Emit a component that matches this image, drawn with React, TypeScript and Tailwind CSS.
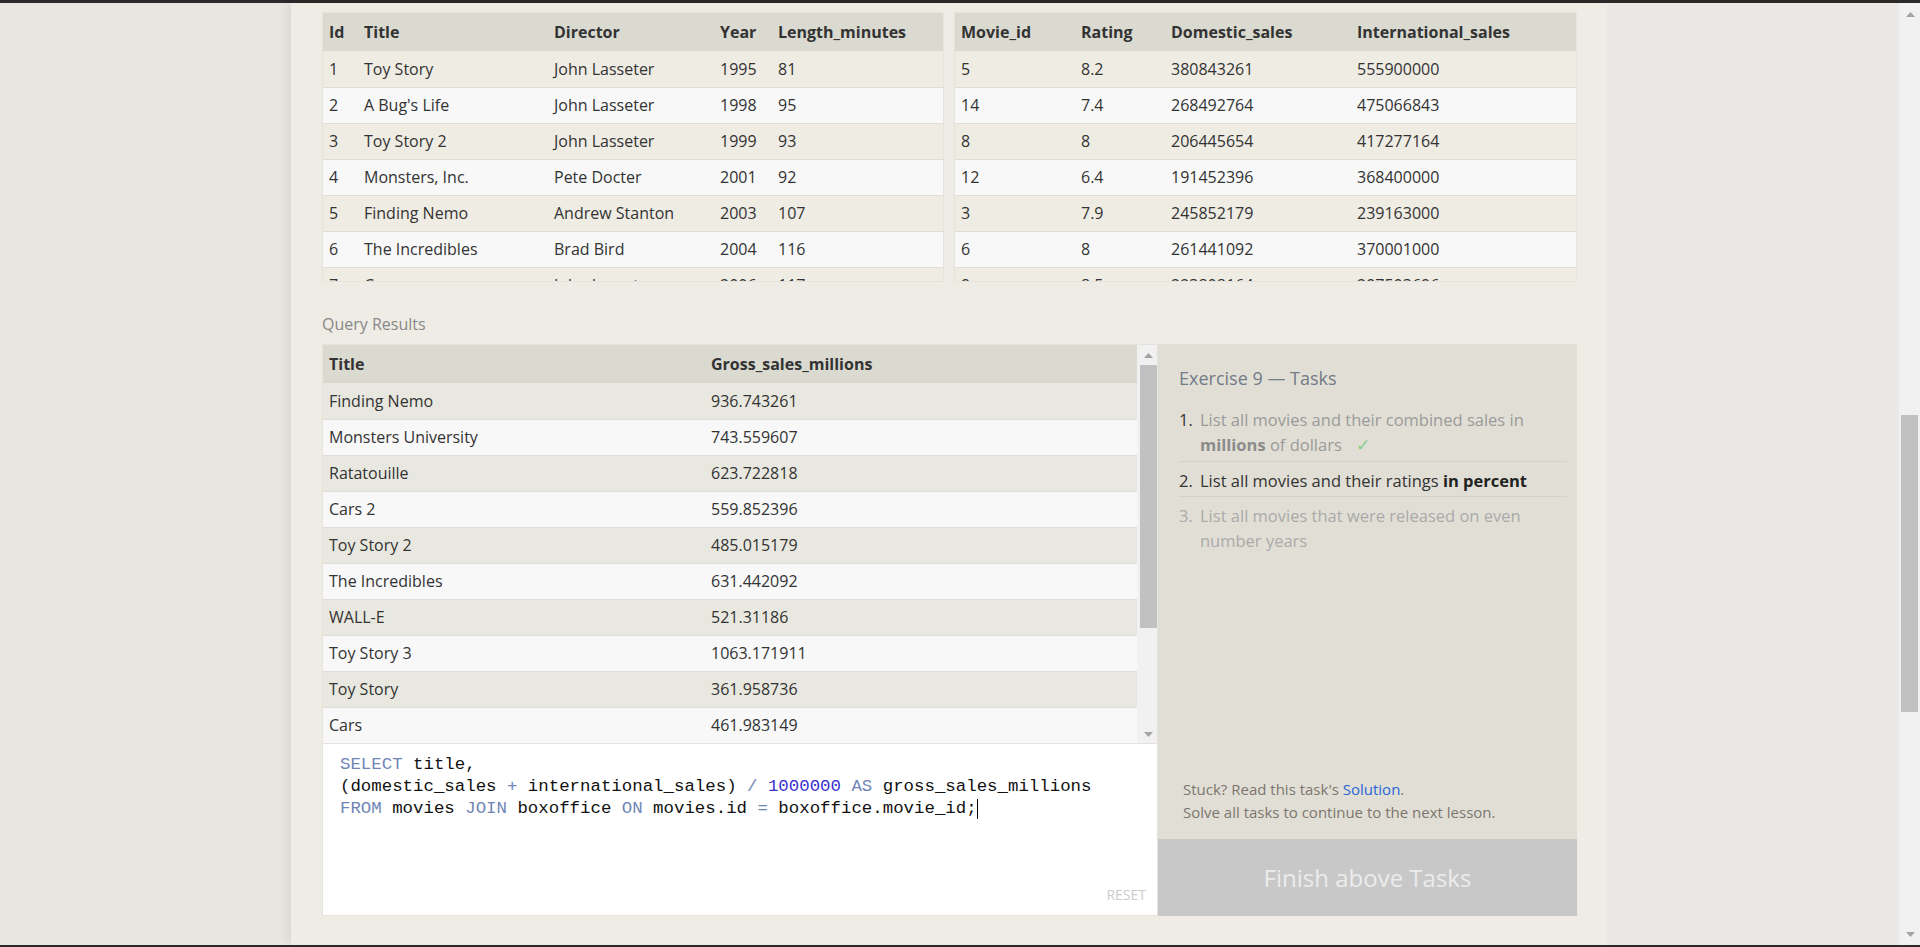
import React from "react";

const movies = [
  ["1", "Toy Story", "John Lasseter", "1995", "81"],
  ["2", "A Bug's Life", "John Lasseter", "1998", "95"],
  ["3", "Toy Story 2", "John Lasseter", "1999", "93"],
  ["4", "Monsters, Inc.", "Pete Docter", "2001", "92"],
  ["5", "Finding Nemo", "Andrew Stanton", "2003", "107"],
  ["6", "The Incredibles", "Brad Bird", "2004", "116"],
  ["7", "Cars", "John Lasseter", "2006", "117"],
];

const boxoffice = [
  ["5", "8.2", "380843261", "555900000"],
  ["14", "7.4", "268492764", "475066843"],
  ["8", "8", "206445654", "417277164"],
  ["12", "6.4", "191452396", "368400000"],
  ["3", "7.9", "245852179", "239163000"],
  ["6", "8", "261441092", "370001000"],
  ["9", "8.5", "223808164", "297503696"],
];

const results = [
  ["Finding Nemo", "936.743261"],
  ["Monsters University", "743.559607"],
  ["Ratatouille", "623.722818"],
  ["Cars 2", "559.852396"],
  ["Toy Story 2", "485.015179"],
  ["The Incredibles", "631.442092"],
  ["WALL-E", "521.31186"],
  ["Toy Story 3", "1063.171911"],
  ["Toy Story", "361.958736"],
  ["Cars", "461.983149"],
];

interface TableProps {
  headers: string[];
  widths: string[];
  rows: string[][];
  oddBg: string;
}

const DataTable = ({ headers, widths, rows, oddBg }: TableProps) => (
  <table className="w-full table-fixed border-collapse text-[16px] text-[#333]">
    <colgroup>
      {widths.map((w, i) => (
        <col key={i} style={{ width: w }} />
      ))}
    </colgroup>
    <thead className="bg-[#dadad0]">
      <tr className="h-[38px] text-left">
        {headers.map((h) => (
          <th key={h} className="px-[6px] font-bold">
            {h}
          </th>
        ))}
      </tr>
    </thead>
    <tbody>
      {rows.map((r, i) => (
        <tr
          key={i}
          className={`h-[36px] border-b border-[#dfddd7] ${i % 2 === 0 ? oddBg : "bg-[#f8f8f8]"}`}
        >
          {r.map((c, j) => (
            <td key={j} className="px-[6px] whitespace-nowrap">
              {c}
            </td>
          ))}
        </tr>
      ))}
    </tbody>
  </table>
);

const Triangle = ({ down }: { down?: boolean }) => (
  <svg width="9" height="6" viewBox="0 0 9 6">
    <path d={down ? "M0 0 L9 0 L4.5 5 Z" : "M0 6 L9 6 L4.5 1 Z"} fill="#a3a3a3" />
  </svg>
);

const kw = "text-[#7185b6]";

export default function App() {
  return (
    <div className="flex h-[947px] w-full flex-col overflow-hidden font-['Open_Sans',sans-serif]">
      <div className="h-[3px] bg-[#2a2a2a]" />
      <div className="flex flex-1 min-h-0">
        <div className="w-[291px] bg-[#e9e6e2]" />
        <div className="relative w-[1316px] bg-[#efece5] pl-[31px] pr-[30px] pt-[9px] shadow-[-6px_0_10px_-2px_rgba(0,0,0,0.07)]">
          {/* top tables */}
          <div className="flex gap-[10px]">
            <div className="h-[270px] w-[622px] overflow-hidden border border-[#e6e3dc]">
              <DataTable
                headers={["Id", "Title", "Director", "Year", "Length_minutes"]}
                widths={["35px", "190px", "166px", "58px", "173px"]}
                rows={movies}
                oddBg="bg-[#efece4]"
              />
            </div>
            <div className="h-[270px] flex-1 overflow-hidden border border-[#e6e3dc]">
              <DataTable
                headers={["Movie_id", "Rating", "Domestic_sales", "International_sales"]}
                widths={["120px", "90px", "186px", "227px"]}
                rows={boxoffice}
                oddBg="bg-[#efece4]"
              />
            </div>
          </div>

          <div className="mt-[30px] mb-[8px] text-[16px] leading-[24px] text-[#888]">Query Results</div>

          <div className="flex h-[572px]">
            <div className="flex w-[836px] flex-col">
              {/* results */}
              <div className="flex h-[400px] border border-[#e6e3dc] overflow-hidden">
                <div className="flex-1 overflow-hidden">
                  <DataTable
                    headers={["Title", "Gross_sales_millions"]}
                    widths={["382px", "432px"]}
                    rows={results}
                    oddBg="bg-[#e9e8e0]"
                  />
                </div>
                <div className="flex w-[20px] flex-col items-center bg-[#f1f1f1] pl-[2px]">
                  <div className="flex h-[20px] items-center justify-center">
                    <Triangle />
                  </div>
                  <div className="h-[263px] w-[17px] bg-[#c1c1c1]" />
                  <div className="flex-1" />
                  <div className="flex h-[17px] items-center justify-center">
                    <Triangle down />
                  </div>
                </div>
              </div>
              {/* editor */}
              <div className="flex flex-1 flex-col border border-t-0 border-[#e6e3dc] bg-white">
                <pre className="pl-[17px] pt-[10px] font-['Liberation_Mono',monospace] text-[17.4px] leading-[22px] text-[#111]">
                  <span className={kw}>SELECT</span> title,{"\n"}(domestic_sales <span className={kw}>+</span> international_sales){" "}
                  <span className={kw}>/</span> <span className="text-[#3a2fd0]">1000000</span> <span className={kw}>AS</span>{" "}
                  gross_sales_millions{"\n"}
                  <span className={kw}>FROM</span> movies <span className={kw}>JOIN</span> boxoffice{" "}
                  <span className={kw}>ON</span> movies.id <span className={kw}>=</span> boxoffice.movie_id;
                  <span className="inline-block h-[20px] w-[1px] align-top mt-[1px] bg-black" />
                </pre>
                <div className="flex-1" />
                <div className="self-end pb-[10px] pr-[11px] text-[14px] leading-[20px] text-[#cccccc]">RESET</div>
              </div>
            </div>

            {/* tasks */}
            <div className="flex flex-1 flex-col bg-[#e1dfd5]">
              <div className="pl-[21px] pr-[10px] pt-[21px]">
                <div className="text-[18px] leading-[27px] text-[#727b88]">Exercise 9 — Tasks</div>
                <ol className="mt-[9px] text-[16.5px] leading-[25px]">
                  <li className="flex border-b border-[#d3d1c8] pb-[4px] pt-[6px]">
                    <span className="w-[21px] shrink-0 text-[#333]">1.</span>
                    <span className="text-[#9a9a9a]">
                      List all movies and their combined sales in <b className="text-[#8c8c8c]">millions</b> of dollars
                      <span className="ml-[14px] text-[#88cc88]">✓</span>
                    </span>
                  </li>
                  <li className="flex border-b border-[#d3d1c8] pb-[3px] pt-[6px]">
                    <span className="w-[21px] shrink-0 text-[#333]">2.</span>
                    <span className="text-[#333]">
                      List all movies and their ratings <b className="text-[#222]">in percent</b>
                    </span>
                  </li>
                  <li className="flex pt-[6px] text-[#aaa]">
                    <span className="w-[21px] shrink-0">3.</span>
                    <span>List all movies that were released on even number years</span>
                  </li>
                </ol>
              </div>
              <div className="flex-1" />
              <div className="mb-[16px] pl-[25px] text-[15px] leading-[22.5px] text-[#7d766f]">
                <div>
                  Stuck? Read this task's <span className="text-[#2a66d8]">Solution</span>.
                </div>
                <div>Solve all tasks to continue to the next lesson.</div>
              </div>
              <div className="flex h-[77px] items-center justify-center bg-[#c8c8c8] text-[24px] text-[#ececec]">
                Finish above Tasks
              </div>
            </div>
          </div>
        </div>
        <div className="flex-1 bg-[#ebe7e4]" />
        <div className="flex w-[21px] flex-col bg-[#f1f1f1] pl-[2px]">
          <div className="flex h-[22px] items-center justify-center">
            <Triangle />
          </div>
          <div className="h-[390px]" />
          <div className="h-[297px] w-[17px] bg-[#c1c1c1]" />
          <div className="flex-1" />
          <div className="flex h-[20px] items-center justify-center">
            <Triangle down />
          </div>
        </div>
      </div>
      <div className="h-[2px] bg-[#2a2a2a]" />
    </div>
  );
}
